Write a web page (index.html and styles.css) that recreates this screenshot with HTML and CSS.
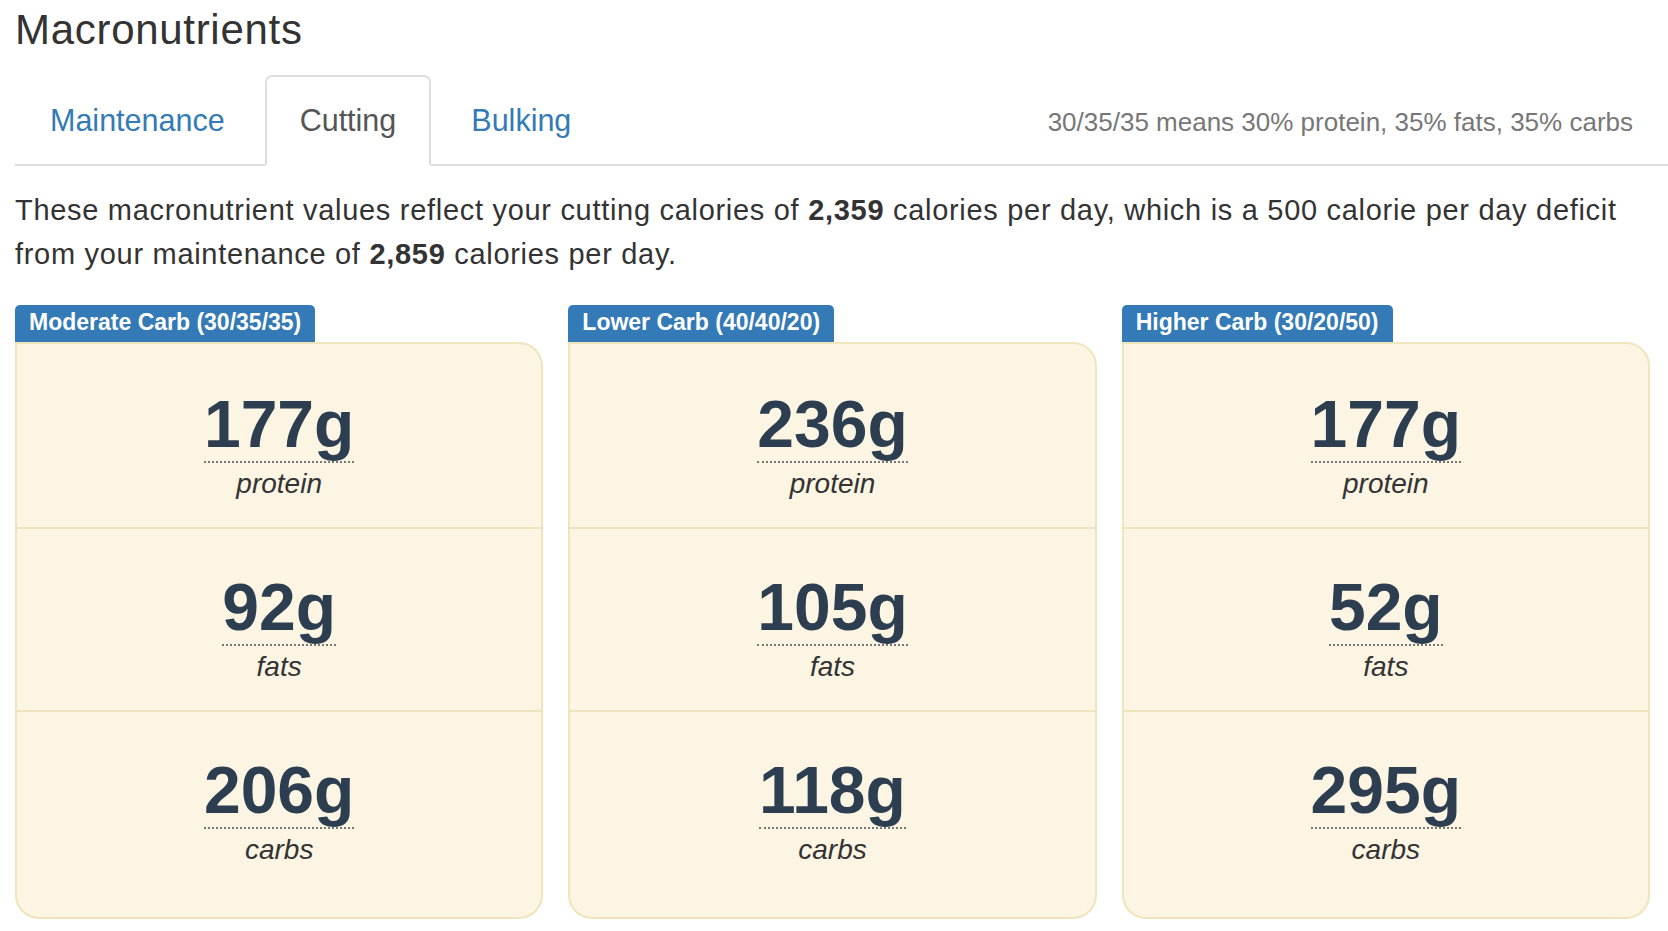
FILE: index.html
```html
<!DOCTYPE html>
<html lang="en">
<head>
<meta charset="utf-8">
<title>Macronutrients</title>
<link rel="stylesheet" href="styles.css">
</head>
<body>
<div class="page">
  <h2 class="title">Macronutrients</h2>
  <div class="tabs">
    <ul class="nav">
      <li><a href="#">Maintenance</a></li>
      <li class="active"><a href="#">Cutting</a></li>
      <li><a href="#">Bulking</a></li>
    </ul>
    <div class="hint">30/35/35 means 30% protein, 35% fats, 35% carbs</div>
  </div>
  <p class="lead">These macronutrient values reflect your cutting calories of <b>2,359</b> calories per day, which is a 500 calorie per day deficit from your maintenance of <b>2,859</b> calories per day.</p>
  <div class="plans">
    <div class="plan">
      <div class="plan-label">Moderate Carb (30/35/35)</div>
      <div class="plan-card">
        <div class="macro"><span class="amount">177g</span><span class="kind">protein</span></div>
        <div class="macro"><span class="amount">92g</span><span class="kind">fats</span></div>
        <div class="macro"><span class="amount">206g</span><span class="kind">carbs</span></div>
      </div>
    </div>
    <div class="plan">
      <div class="plan-label">Lower Carb (40/40/20)</div>
      <div class="plan-card">
        <div class="macro"><span class="amount">236g</span><span class="kind">protein</span></div>
        <div class="macro"><span class="amount">105g</span><span class="kind">fats</span></div>
        <div class="macro"><span class="amount">118g</span><span class="kind">carbs</span></div>
      </div>
    </div>
    <div class="plan">
      <div class="plan-label">Higher Carb (30/20/50)</div>
      <div class="plan-card">
        <div class="macro"><span class="amount">177g</span><span class="kind">protein</span></div>
        <div class="macro"><span class="amount">52g</span><span class="kind">fats</span></div>
        <div class="macro"><span class="amount">295g</span><span class="kind">carbs</span></div>
      </div>
    </div>
  </div>
</div>
</body>
</html>
```
FILE: styles.css
```css
* { box-sizing: border-box; }
html, body { margin: 0; padding: 0; background: #fff; }
body {
  font-family: "Liberation Sans", Arial, sans-serif;
  color: #333;
}
.page {
  padding-left: 15px;
}
.title {
  margin: 7px 0 0;
  font-size: 42px;
  font-weight: normal;
  line-height: 1.1;
  letter-spacing: 0.7px;
  color: #333;
}
.tabs {
  margin-top: 22px;
  display: flex;
  align-items: center;
  justify-content: space-between;
  border-bottom: 2px solid #ddd;
  padding-right: 35px;
}
.nav {
  display: flex;
  list-style: none;
  margin: 0 0 -2px;
  padding: 0;
}
.nav li { margin-right: 5px; }
.nav a {
  display: block;
  padding: 22px 33px;
  border: 2px solid transparent;
  border-radius: 7px 7px 0 0;
  font-size: 30.5px;
  line-height: 42.9px;
  color: #337ab7;
  text-decoration: none;
}
.nav li.active a {
  border-color: #ddd;
  border-bottom-color: #fff;
  background: #fff;
  color: #555;
}
.hint {
  padding-top: 6px;
  font-size: 26px;
  color: #777;
}
.lead {
  margin: 22px 18px 0 0;
  font-size: 29px;
  line-height: 44px;
  letter-spacing: 0.7px;
  color: #333;
}
.lead b { font-weight: bold; }
.plans {
  margin: 29px 18px 0 0;
  display: grid;
  grid-template-columns: repeat(3, 1fr);
  gap: 25px;
}
.plan {
  display: flex;
  flex-direction: column;
  align-items: flex-start;
}
.plan-label {
  background: #337ab7;
  color: #fff;
  font-weight: bold;
  font-size: 23px;
  line-height: 32px;
  padding: 1px 14px 4px;
  border-radius: 5px 5px 0 0;
}
.plan-card {
  align-self: stretch;
  background: #fcf5e3;
  border: 2px solid #efe5bd;
  border-radius: 0 24px 24px 24px;
  padding: 2px 0 24px;
}
.macro {
  padding: 42px 0 27.5px;
  text-align: center;
}
.macro + .macro {
  border-top: 2px solid #efe5bd;
}
.amount {
  display: inline-block;
  font-size: 66px;
  font-weight: bold;
  line-height: 1.1;
  color: #2c3e50;
  border-bottom: 2px dotted #777;
}
.kind {
  display: block;
  margin-top: 5.5px;
  font-size: 28px;
  font-style: italic;
  line-height: 1.12;
  color: #333;
}
```
